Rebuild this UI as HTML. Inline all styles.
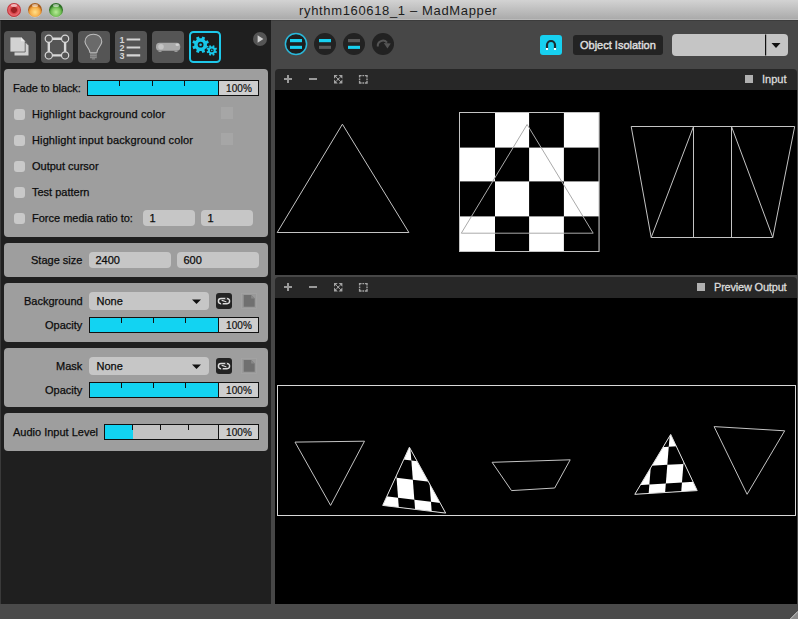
<!DOCTYPE html>
<html><head><meta charset="utf-8">
<style>
*{box-sizing:border-box;margin:0;padding:0}
html,body{width:798px;height:619px;overflow:hidden;background:#474747;font-family:"Liberation Sans",sans-serif;font-size:11px;position:relative}
.a{position:absolute}
#title{left:0;top:0;width:798px;height:20px;background:linear-gradient(#d3d3d3,#ababab 94%,#bababa 95%,#bababa)}
#title .t{left:299px;top:3px;font-size:13px;color:#1c1c1c;letter-spacing:0.65px;white-space:nowrap}
.tl{width:14px;height:14px;border-radius:50%;top:3px;box-shadow:0 0.5px 0.5px rgba(255,255,255,.5)}
.hl{left:4px;top:1px;width:6px;height:3px;border-radius:50%;background:rgba(255,255,255,.55)}
#side{left:0;top:20px;width:271px;height:584px;background:#1f1f1f;border-left:1px solid #3a3a3a;border-top:1px solid #1a1a1a}
#mline{left:271px;top:20px;width:527px;height:1px;background:#3c3c3c}
.ib{width:32px;height:32px;top:31px;border-radius:4px;background:#555}
.pn{left:4px;width:264px;background:#9e9e9e;border-radius:4px}
.lbl{color:#0c0c0c;white-space:nowrap;-webkit-text-stroke:0.25px #0c0c0c}
.cb{width:11px;height:11px;border-radius:3px;background:#c9c9c9;left:14px}
.sl{height:16px;border:1px solid #111;background:#d0d0d0}
.sl .f{left:0;top:0;bottom:0;background:#12d3f2;border-right:1px solid #111}
.sl .tk{top:0;width:1px;height:6px;background:#111}
.v{font-size:10px;color:#111;letter-spacing:0.1px;-webkit-text-stroke:0.2px #111}
.inp{height:16px;border-radius:4px;background:#c6c6c6}
.inp span{left:6px;top:1px;color:#0c0c0c;-webkit-text-stroke:0.25px #0c0c0c}
.tb{height:21px;background:#272727;border-radius:4px 4px 0 0}
.blk{background:#000}
</style></head><body>
<div id="title" class="a"><div class="a t">ryhthm160618_1 – MadMapper</div>
<div class="a tl" style="left:7px;background:radial-gradient(circle at 50% 50%,#9c1f22 0 2.6px,#d23b40 3.2px,#ea6a70 5.2px,#b8262c 6.9px)"><div class="a hl"></div></div>
<div class="a tl" style="left:28px;background:radial-gradient(circle at 50% 65%,#ffe08a 0,#f6b24e 4.5px,#e08a2a 6.2px,#a85e1e 6.9px)"><div class="a hl"></div></div>
<div class="a tl" style="left:49px;background:radial-gradient(circle at 50% 65%,#b8ec98 0,#78c25a 4.5px,#4c9a38 6.2px,#2e6e26 6.9px)"><div class="a hl"></div></div>
</div>
<div id="mline" class="a"></div><div id="side" class="a">
</div>
<svg class="a" style="left:0;top:0" width="271" height="70" viewBox="0 0 271 70">
<g fill="#555">
<rect x="4" y="31" width="32" height="32" rx="4"/>
<rect x="41" y="31" width="32" height="32" rx="4"/>
<rect x="78" y="31" width="32" height="32" rx="4"/>
<rect x="115" y="31" width="32" height="32" rx="4"/>
<rect x="152" y="31" width="32" height="32" rx="4"/>
</g>
<rect x="190" y="32" width="30" height="30" rx="3.5" fill="#1c1c1c" stroke="#1ec8ea" stroke-width="2"/>
<!-- docs -->
<path d="M14 42.5 H26 L29 45.5 V56 H14 Z" fill="#d0d0d0" stroke="#555" stroke-width="1"/>
<path d="M10 37 H21 L25.2 41.2 V52 H10 Z" fill="#d2d2d2" stroke="#555" stroke-width="0.8"/>
<path d="M21 37 V41.2 H25.2" fill="#e8e8e8"/>
<!-- nodes -->
<g fill="none" stroke="#d8d8d8">
<path d="M48.8 38.7 H65.1 V55.4 H48.8 Z" stroke-width="2.4"/>
</g>
<g fill="#555" stroke="#d8d8d8" stroke-width="1.2">
<circle cx="48.8" cy="38.7" r="3.6"/><circle cx="65.1" cy="38.7" r="3.6"/>
<circle cx="48.8" cy="55.4" r="3.6"/><circle cx="65.1" cy="55.4" r="3.6"/>
</g>
<!-- bulb -->
<path d="M90 52.5 C90 49 85 45.5 85 41.8 C85 37 88.8 34.2 93.4 34.2 C98 34.2 101.8 37 101.8 41.8 C101.8 45.5 96.8 49 96.8 52.5 Z" fill="#6a6a6a" stroke="#bdbdbd" stroke-width="1.1"/>
<rect x="90" y="52.6" width="6.8" height="5.6" fill="#8c8c8c"/>
<rect x="90" y="54.2" width="6.8" height="0.8" fill="#777"/><rect x="90" y="56" width="6.8" height="0.8" fill="#777"/>
<rect x="91.8" y="58.2" width="3.2" height="1.3" fill="#888"/>
<!-- list -->
<g fill="#d5d5d5" font-family="Liberation Sans" font-weight="bold" font-size="9">
<text x="119.5" y="42.8">1</text><text x="119.5" y="50.8">2</text><text x="119.5" y="58.7">3</text>
</g>
<g stroke="#d5d5d5" stroke-width="2.2">
<path d="M126.6 39.5 H140.2 M126.6 47.5 H140.2 M126.6 55.4 H140.2"/>
</g>
<!-- projector -->
<rect x="156" y="42.8" width="24.2" height="8" rx="3.5" fill="#a9a9a9"/>
<circle cx="161" cy="46.7" r="2.8" fill="#c4c4c4"/>
<ellipse cx="177.3" cy="44.8" rx="1.8" ry="1.2" fill="#d0d0d0"/>
<rect x="158.5" y="50.5" width="3" height="1.5" fill="#999"/><rect x="174.5" y="50.5" width="3" height="1.5" fill="#999"/>
<!-- gears -->
<path fill-rule="evenodd" fill="#17c8ea" d="M206.93 45.65 L208.90 46.55 L207.78 49.25 L205.75 48.50 L204.40 49.85 L205.15 51.88 L202.45 53.00 L201.55 51.03 L199.65 51.03 L198.75 53.00 L196.05 51.88 L196.80 49.85 L195.45 48.50 L193.42 49.25 L192.30 46.55 L194.27 45.65 L194.27 43.75 L192.30 42.85 L193.42 40.15 L195.45 40.90 L196.80 39.55 L196.05 37.52 L198.75 36.40 L199.65 38.37 L201.55 38.37 L202.45 36.40 L205.15 37.52 L204.40 39.55 L205.75 40.90 L207.78 40.15 L208.90 42.85 L206.93 43.75 Z M200.60 41.80 A2.9 2.9 0 1 0 200.60 47.60 A2.9 2.9 0 1 0 200.60 41.80 Z"/>
<circle cx="200.6" cy="44.7" r="1.3" fill="#17c8ea"/>
<path fill-rule="evenodd" fill="#17c8ea" stroke="#1c1c1c" stroke-width="1" paint-order="stroke" d="M215.76 50.99 L217.07 51.58 L216.36 53.29 L215.02 52.78 L214.18 53.62 L214.69 54.96 L212.98 55.67 L212.39 54.36 L211.21 54.36 L210.62 55.67 L208.91 54.96 L209.42 53.62 L208.58 52.78 L207.24 53.29 L206.53 51.58 L207.84 50.99 L207.84 49.81 L206.53 49.22 L207.24 47.51 L208.58 48.02 L209.42 47.18 L208.91 45.84 L210.62 45.13 L211.21 46.44 L212.39 46.44 L212.98 45.13 L214.69 45.84 L214.18 47.18 L215.02 48.02 L216.36 47.51 L217.07 49.22 L215.76 49.81 Z M211.80 48.50 A1.9 1.9 0 1 0 211.80 52.30 A1.9 1.9 0 1 0 211.80 48.50 Z"/>
<circle cx="211.8" cy="50.4" r="0.8" fill="#17c8ea"/>
<!-- play -->
<circle cx="260" cy="39" r="7" fill="#555"/>
<path d="M257.6 35.2 L263.4 39 L257.6 42.8 Z" fill="#cfcfcf"/>
</svg>
<!-- panel1 -->
<div class="a pn" style="top:69px;height:168px"></div>
<div class="a lbl" style="left:13px;top:82px;letter-spacing:-0.1px">Fade to black:</div>
<div class="a" style="left:87px;top:80px;width:172px;height:16px;background:#111"></div>
<div class="a" style="left:88px;top:81px;width:130px;height:14px;background:#c3c3c3"></div>
<div class="a" style="left:88px;top:81px;width:130px;height:14px;background:#12d3f2"></div>
<div class="a" style="left:119px;top:81px;width:1px;height:5px;background:#111"></div>
<div class="a" style="left:152px;top:81px;width:1px;height:5px;background:#111"></div>
<div class="a" style="left:184px;top:81px;width:1px;height:5px;background:#111"></div>
<div class="a" style="left:219px;top:81px;width:39px;height:14px;background:#cecece"></div>
<div class="a v" style="left:226px;top:83px">100%</div>
<div class="a cb" style="top:109px"></div><div class="a lbl" style="left:32px;top:108px;letter-spacing:0.12px">Highlight background color</div>
<div class="a cb" style="top:135px"></div><div class="a lbl" style="left:32px;top:134px;letter-spacing:0.12px">Highlight input background color</div>
<div class="a cb" style="top:161px"></div><div class="a lbl" style="left:32px;top:160px;">Output cursor</div>
<div class="a cb" style="top:187px"></div><div class="a lbl" style="left:32px;top:186px;">Test pattern</div>
<div class="a cb" style="top:213px"></div><div class="a lbl" style="left:32px;top:212px;">Force media ratio to:</div>
<div class="a" style="left:221px;top:107px;width:12px;height:12px;background:#a6a6a6"></div>
<div class="a" style="left:221px;top:133px;width:12px;height:12px;background:#a6a6a6"></div>
<div class="a inp" style="left:143px;top:210px;width:52px;height:16px"><span class="a" style="top:2px;left:6.5px">1</span></div>
<div class="a inp" style="left:201px;top:210px;width:52px;height:16px"><span class="a" style="top:2px;left:6.5px">1</span></div>
<div class="a pn" style="top:243px;height:34px"></div>
<div class="a lbl" style="left:31px;top:254px">Stage size</div>
<div class="a inp" style="left:89px;top:252px;width:82px;height:16px"><span class="a" style="top:2px;left:6.5px">2400</span></div>
<div class="a inp" style="left:177px;top:252px;width:82px;height:16px"><span class="a" style="top:2px;left:6.5px">600</span></div>
<div class="a pn" style="top:283px;height:59px"></div>
<div class="a lbl" style="left:24px;top:295px">Background</div>
<div class="a inp" style="left:89px;top:292px;width:120px;height:18px"><span class="a" style="top:3px;left:7.5px">None</span></div><svg class="a" style="left:191px;top:299px" width="11" height="6"><path d="M1 0.5 H10 L5.5 5 Z" fill="#111"/></svg>
<svg class="a" style="left:216px;top:293px" width="42" height="17" viewBox="0 0 42 17">
<rect x="0" y="0" width="16" height="16" rx="3" fill="#232323"/>
<path d="M5 5.5 H11 A2.6 2.6 0 0 1 11 10.7 H5 A2.6 2.6 0 0 1 5 5.5 Z" fill="none" stroke="#dadada" stroke-width="1.45"/>
<rect x="9.3" y="4.4" width="1.6" height="1.9" fill="#232323"/><rect x="5.1" y="9.9" width="1.6" height="1.9" fill="#232323"/>
<path d="M5.6 7.4 C7.4 7.2 8.4 8.9 10.4 8.8" fill="none" stroke="#dadada" stroke-width="1.2"/>
<rect x="25.5" y="0.5" width="15" height="15" fill="#999" stroke="#a4a4a4" stroke-width="0.8"/>
<path d="M27.7 2 H35.2 L38.7 5.5 V13.8 H27.7 Z" fill="#707070"/><path d="M35.2 2 V5.5 H38.7 Z" fill="#888"/>
</svg>
<div class="a lbl" style="left:45px;top:319px">Opacity</div>
<div class="a" style="left:89px;top:317px;width:170px;height:16px;background:#111"></div>
<div class="a" style="left:90px;top:318px;width:128px;height:14px;background:#c3c3c3"></div>
<div class="a" style="left:90px;top:318px;width:128px;height:14px;background:#12d3f2"></div>
<div class="a" style="left:121px;top:318px;width:1px;height:5px;background:#111"></div>
<div class="a" style="left:153px;top:318px;width:1px;height:5px;background:#111"></div>
<div class="a" style="left:185px;top:318px;width:1px;height:5px;background:#111"></div>
<div class="a" style="left:219px;top:318px;width:39px;height:14px;background:#cecece"></div>
<div class="a v" style="left:226px;top:320px">100%</div>
<div class="a pn" style="top:348px;height:59px"></div>
<div class="a lbl" style="left:56px;top:360px">Mask</div>
<div class="a inp" style="left:89px;top:357px;width:120px;height:18px"><span class="a" style="top:3px;left:7.5px">None</span></div><svg class="a" style="left:191px;top:364px" width="11" height="6"><path d="M1 0.5 H10 L5.5 5 Z" fill="#111"/></svg>
<svg class="a" style="left:216px;top:358px" width="42" height="17" viewBox="0 0 42 17">
<rect x="0" y="0" width="16" height="16" rx="3" fill="#232323"/>
<path d="M5 5.5 H11 A2.6 2.6 0 0 1 11 10.7 H5 A2.6 2.6 0 0 1 5 5.5 Z" fill="none" stroke="#dadada" stroke-width="1.45"/>
<rect x="9.3" y="4.4" width="1.6" height="1.9" fill="#232323"/><rect x="5.1" y="9.9" width="1.6" height="1.9" fill="#232323"/>
<path d="M5.6 7.4 C7.4 7.2 8.4 8.9 10.4 8.8" fill="none" stroke="#dadada" stroke-width="1.2"/>
<rect x="25.5" y="0.5" width="15" height="15" fill="#999" stroke="#a4a4a4" stroke-width="0.8"/>
<path d="M27.7 2 H35.2 L38.7 5.5 V13.8 H27.7 Z" fill="#707070"/><path d="M35.2 2 V5.5 H38.7 Z" fill="#888"/>
</svg>
<div class="a lbl" style="left:45px;top:384px">Opacity</div>
<div class="a" style="left:89px;top:382px;width:170px;height:16px;background:#111"></div>
<div class="a" style="left:90px;top:383px;width:128px;height:14px;background:#c3c3c3"></div>
<div class="a" style="left:90px;top:383px;width:128px;height:14px;background:#12d3f2"></div>
<div class="a" style="left:121px;top:383px;width:1px;height:5px;background:#111"></div>
<div class="a" style="left:153px;top:383px;width:1px;height:5px;background:#111"></div>
<div class="a" style="left:185px;top:383px;width:1px;height:5px;background:#111"></div>
<div class="a" style="left:219px;top:383px;width:39px;height:14px;background:#cecece"></div>
<div class="a v" style="left:226px;top:385px">100%</div>
<div class="a pn" style="top:413px;height:38px"></div>
<div class="a lbl" style="left:13px;top:426px">Audio Input Level</div>
<div class="a" style="left:104px;top:424px;width:155px;height:16px;background:#111"></div>
<div class="a" style="left:105px;top:425px;width:113px;height:14px;background:#c3c3c3"></div>
<div class="a" style="left:105px;top:425px;width:28px;height:14px;background:#12d3f2"></div>
<div class="a" style="left:132px;top:425px;width:1px;height:5px;background:#111"></div>
<div class="a" style="left:160px;top:425px;width:1px;height:5px;background:#111"></div>
<div class="a" style="left:188px;top:425px;width:1px;height:5px;background:#111"></div>
<div class="a" style="left:219px;top:425px;width:39px;height:14px;background:#cecece"></div>
<div class="a v" style="left:226px;top:427px">100%</div>
<!-- main -->
<div class="a tb" style="left:275px;top:69px;width:522px"></div>
<div class="a blk" style="left:275px;top:90px;width:522px;height:185px"></div>
<div class="a tb" style="left:275px;top:277px;width:522px"></div>
<div class="a blk" style="left:275px;top:298px;width:522px;height:306px"></div>
<div class="a" style="left:0;top:604px;width:798px;height:15px;background:#4a4a4a"></div>

<!-- top toolbar -->
<svg class="a" style="left:0;top:0" width="798" height="619" viewBox="0 0 798 619">
<circle cx="296" cy="44" r="10.6" fill="#1e1e1e" stroke="#2ab8da" stroke-width="1.5"/>
<rect x="290" y="39" width="12" height="3.2" fill="#17d0f0"/><rect x="290" y="45.8" width="12" height="3.1" fill="#17d0f0"/>
<circle cx="325" cy="44" r="11" fill="#222"/>
<rect x="319" y="39" width="12" height="3.2" fill="#17d0f0"/><rect x="319" y="45.8" width="12" height="3.1" fill="#5a5a5a"/>
<circle cx="354" cy="44" r="11" fill="#222"/>
<rect x="348" y="39" width="12" height="3.2" fill="#5a5a5a"/><rect x="348" y="45.8" width="12" height="3.1" fill="#17d0f0"/>
<circle cx="383" cy="44" r="11" fill="#222"/>
<path d="M377.8 46.5 A5.2 5.2 0 0 1 387 42.6" fill="none" stroke="#555" stroke-width="2"/>
<path d="M383.8 43 L390.8 43.4 L387.4 48.6 Z" fill="#555"/>
<rect x="540" y="35" width="22" height="20" rx="3" fill="#17d0f0"/>
<path d="M547 50 V45 A4 4 0 0 1 555 45 V50" fill="none" stroke="#1d2b30" stroke-width="2.2"/>
<rect x="545.9" y="48" width="2.2" height="2" fill="#fff"/><rect x="553.9" y="48" width="2.2" height="2" fill="#fff"/>
<rect x="573" y="35" width="90" height="20" rx="3" fill="#232323"/>
<rect x="672" y="34" width="116" height="22" rx="4" fill="#c5c5c5"/>
<rect x="765" y="34.5" width="1.2" height="21" fill="#111"/>
<path d="M771.5 43 L780.5 43 L776 48 Z" fill="#111"/>
<!-- panel toolbar icons -->
<g fill="#9a9a9a">
<rect x="284" y="78" width="8" height="2"/><rect x="287" y="75" width="2" height="8"/>
<rect x="309" y="78" width="8" height="2"/>
<rect x="284" y="286" width="8" height="2"/><rect x="287" y="283" width="2" height="8"/>
<rect x="309" y="286" width="8" height="2"/>
</g>
<g transform="translate(0,0)">
<g fill="#a4a4a4">
<path d="M334 75 H337.8 L334 78.8 Z M342.4 75 H338.6 L342.4 78.8 Z M334 83.4 H337.8 L334 79.6 Z M342.4 83.4 H338.6 L342.4 79.6 Z"/>
<circle cx="338.2" cy="79.2" r="1"/>
</g>
<path d="M335.5 76.5 L340.9 81.9 M340.9 76.5 L335.5 81.9" stroke="#a4a4a4" stroke-width="0.9"/>
<path d="M359.6 77.6 V75.6 H361.6 M362.4 75.6 H364.2 M365 75.6 H367 V77.6 M367 78.4 V80.2 M367 81 V83 H365 M364.2 83 H362.4 M361.6 83 H359.6 V81 M359.6 80.2 V78.4" fill="none" stroke="#a4a4a4" stroke-width="1.4"/>
</g>
<g transform="translate(0,208)">
<g fill="#a4a4a4">
<path d="M334 75 H337.8 L334 78.8 Z M342.4 75 H338.6 L342.4 78.8 Z M334 83.4 H337.8 L334 79.6 Z M342.4 83.4 H338.6 L342.4 79.6 Z"/>
<circle cx="338.2" cy="79.2" r="1"/>
</g>
<path d="M335.5 76.5 L340.9 81.9 M340.9 76.5 L335.5 81.9" stroke="#a4a4a4" stroke-width="0.9"/>
<path d="M359.6 77.6 V75.6 H361.6 M362.4 75.6 H364.2 M365 75.6 H367 V77.6 M367 78.4 V80.2 M367 81 V83 H365 M364.2 83 H362.4 M361.6 83 H359.6 V81 M359.6 80.2 V78.4" fill="none" stroke="#a4a4a4" stroke-width="1.4"/>
</g>
<rect x="745" y="75" width="8" height="8" fill="#b0b0b0"/>
<rect x="697" y="283" width="8" height="8" fill="#b0b0b0"/>
<text x="762" y="83" fill="#dcdcdc" stroke="#dcdcdc" stroke-width="0.3" font-family="Liberation Sans" font-size="11">Input</text>
<text x="714" y="291" fill="#dcdcdc" stroke="#dcdcdc" stroke-width="0.3" font-family="Liberation Sans" font-size="11" letter-spacing="-0.2">Preview Output</text>
<defs>
<g id="cbd">
<rect x="459.5" y="112.5" width="139.7" height="139" fill="#fff"/>
<g fill="#000">
<rect x="459.5" y="112.5" width="35.5" height="35.1"/><rect x="529.1" y="112.5" width="34.8" height="35.1"/>
<rect x="495" y="147.6" width="34.1" height="33.8"/><rect x="563.9" y="147.6" width="35.3" height="33.8"/>
<rect x="459.5" y="181.4" width="35.5" height="35"/><rect x="529.1" y="181.4" width="34.8" height="35"/>
<rect x="495" y="216.4" width="34.1" height="35.1"/><rect x="563.9" y="216.4" width="35.3" height="35.1"/>
</g>
</g>
<clipPath id="c1"><polygon points="409.4,447.2 382.7,505.4 445.7,513.1"/></clipPath>
<clipPath id="c2"><polygon points="670.7,434.4 697.2,490.6 634.8,494.3"/></clipPath>
</defs>
<use href="#cbd"/>
<rect x="459.5" y="112.5" width="139.5" height="139" fill="none" stroke="#c4c4c4" stroke-width="1"/>
<g fill="none" stroke="#c4c4c4" stroke-width="1">
<polygon points="342.4,124.2 277.2,232.5 408.9,232.5"/>
<polygon points="631.2,126.5 794.7,126.5 772.8,237.5 651.2,237.5"/>
<path d="M651.2 237.5 L693.5 126.5 V237.5 M731.5 237.5 V126.5 L772.8 237.5"/>
<rect x="277.5" y="385.5" width="518" height="130" stroke="#d8d8d8"/>
<polygon points="295,442.1 364.5,441.2 330.6,505.4"/>
<polygon points="492.1,462.3 570.2,459.8 554.7,488 511.5,490.6"/>
<polygon points="714.1,426.6 784.7,430.8 747.1,494.3"/>
</g>
<polygon points="527.1,124.5 461.3,233.2 593.2,233.2" fill="none" stroke="#aaa" stroke-width="1"/>
<g clip-path="url(#c1)"><use href="#cbd" transform="matrix(0.47763 0.05838 0.04350 0.57076 152.223 345.370)"/></g>
<g clip-path="url(#c2)"><use href="#cbd" transform="matrix(-0.47309 0.02805 -0.04259 0.53400 925.365 353.131)"/></g>
<polygon points="409.4,447.2 382.7,505.4 445.7,513.1" fill="none" stroke="#ddd" stroke-width="1"/>
<polygon points="670.7,434.4 697.2,490.6 634.8,494.3" fill="none" stroke="#ddd" stroke-width="1"/>
<polygon points="790,619 798,611 798,619" fill="#8a8a8a"/><path d="M790.3 619 L798 611.3" stroke="#c8c8c8" stroke-width="1"/>
<text x="580" y="49" fill="#dcdcdc" stroke="#dcdcdc" stroke-width="0.45" font-family="Liberation Sans" font-size="11">Object Isolation</text>
</svg>
</body></html>
